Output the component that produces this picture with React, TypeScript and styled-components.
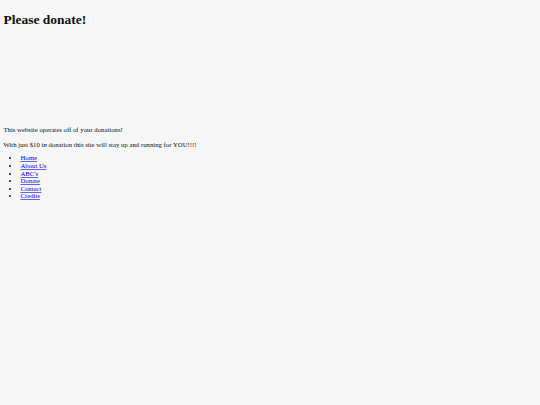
import { FC } from 'react'
import styled, { createGlobalStyle } from 'styled-components'

// the page is a 1280px layout seen at 540px, so every size is scaled by 0.42
const GlobalStyle = createGlobalStyle`
  html, body {
    background: #f6f6f6;
  }
  body {
    margin: 3.4px;
    font-family: "Liberation Serif", "Times New Roman", serif;
    font-size: 6.75px;
    color: #111;
  }
`

const Page = styled.main`
  display: flex;
  flex-direction: column;
`

const Title = styled.h1`
  font-size: 13.5px;
  font-weight: bold;
  margin: 9px 0 0;
  line-height: 15.5px;
`

const Banner = styled.div`
  height: 98.5px;
`

const Text = styled.p`
  margin: 0 0 6.6px;
  line-height: 7.8px;
`

const NavList = styled.ul`
  margin: -0.8px 0 0;
  padding-left: 17px;
  list-style: disc;
`

const NavItem = styled.li`
  line-height: 7.6px;
`

const NavLink = styled.a`
  color: #0000ee;
  text-decoration: underline;
  text-decoration-thickness: 1px;
  text-decoration-color: rgba(0, 0, 238, 0.6);
  text-decoration-skip-ink: none;
  text-underline-offset: 1.2px;
`

const links = ['Home', 'About Us', "ABC's", 'Donate', 'Contact', 'Credits']

const App: FC = () => (
  <>
    <GlobalStyle />
    <Page>
      <Title>Please donate!</Title>
      <Banner />
      <Text>This website operates off of your donations!</Text>
      <Text>With just $10 in donation this site will stay up and running for YOU!!!!</Text>
      <NavList>
        {links.map(label => (
          <NavItem key={label}>
            <NavLink href="#">{label}</NavLink>
          </NavItem>
        ))}
      </NavList>
    </Page>
  </>
)

export default App
